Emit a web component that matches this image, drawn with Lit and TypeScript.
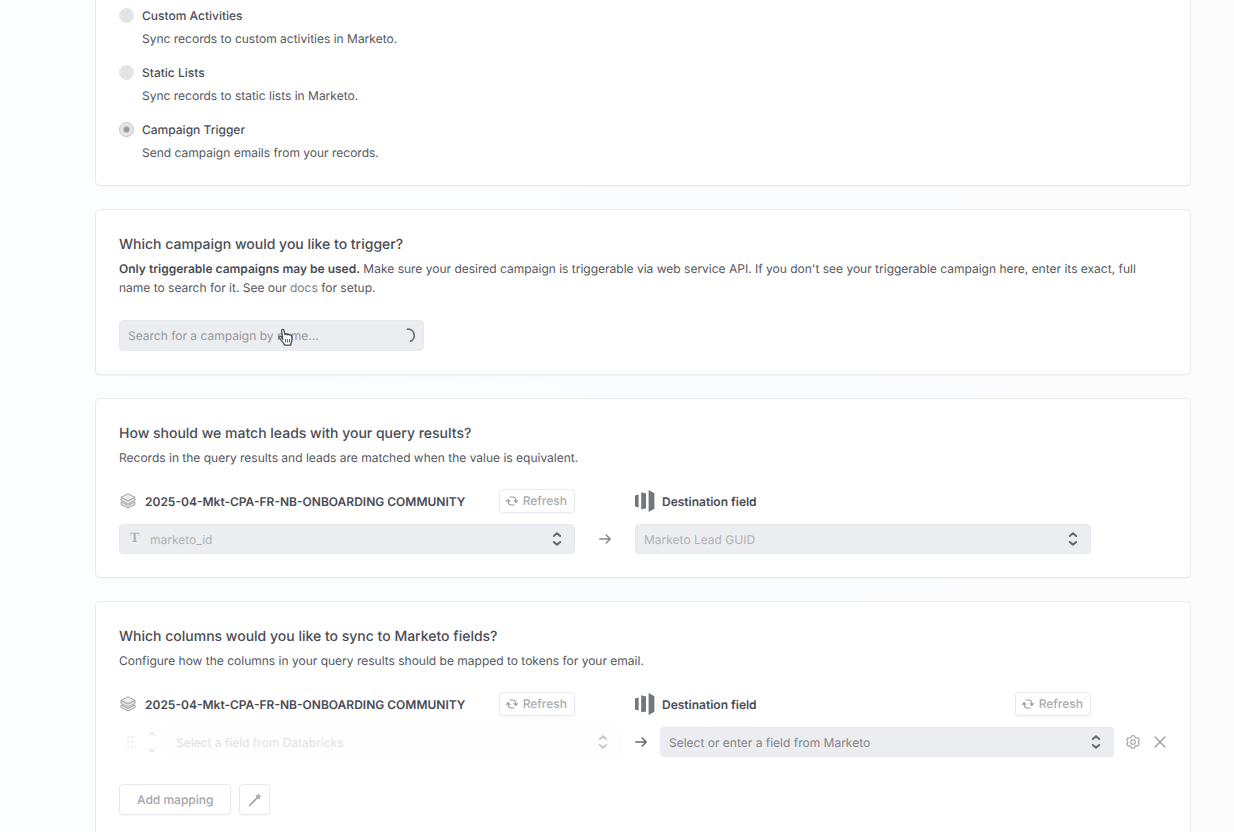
import { LitElement, html, css, svg } from "lit";
import { customElement, property } from "lit/decorators.js";

const layersIcon = html`<svg class="layers" viewBox="0 0 16 16" width="16" height="16" fill="none" stroke="#a2a4a8" stroke-width="1" stroke-linejoin="round" aria-hidden="true">
  <path fill="#ececee" d="M8 .8 15 4.4 8 8 1 4.4Z" />
  <path fill="#e4e5e7" d="M1 4.400v3L8 11l7-3.600v-3L8 8ZM1 8.800v2.600L8 15l7-3.600V8.800L8 12.400Z" />
</svg>`;

const marketoIcon = html`<svg viewBox="0 0 20 22" width="20" height="22" fill="#74767e" aria-hidden="true">
  <path d="M0 5.500 3.600 4.600v12.800L0 16.500Z" />
  <path d="M6.200 2.200 11 3.600v14.800l-4.800.8Z" />
  <path d="M13.600 0 19.400 3.200v15.600L13.600 22Z" />
</svg>`;

const refreshIcon = html`<svg viewBox="0 0 12 12" width="12" height="12" fill="none" stroke="#9b9da1" stroke-width="1.200" stroke-linecap="round" stroke-linejoin="round" aria-hidden="true">
  <path d="M4 2h2.800a3 3 0 0 1 3 3v2.200M8 10H5.200a3 3 0 0 1-3-3V4.800" />
  <path d="M.6 6.300 2.200 4.700l1.600 1.600M8.200 5.700l1.600 1.600 1.600-1.600" />
</svg>`;

const arrowIcon = html`<svg viewBox="0 0 12 12" width="12" height="12" fill="none" stroke="currentColor" stroke-width="1.500" stroke-linecap="round" stroke-linejoin="round" aria-hidden="true">
  <path d="M.8 6h10.400M7.200 2 11.200 6 7.200 10" />
</svg>`;

const sortIcon = html`<svg class="sort" viewBox="0 0 10 16" width="10" height="16" fill="none" stroke="currentColor" stroke-width="2" stroke-linecap="round" stroke-linejoin="round" aria-hidden="true">
  <path d="M1.800 5 5 2.200 8.200 5M1.800 11 5 13.800 8.200 11" />
</svg>`;

const gearTeeth = svg`<path d="M5.500.8h3l.5 1.700 1.300.7 1.700-.4 1.300 2.300-1.100 1.200v1.400l1.100 1.200-1.300 2.300-1.700-.4-1.300.7-.5 1.700h-3L5 11.500l-1.300-.7-1.700.4L.7 8.900l1.100-1.200V6.300L.7 5.100 2 2.800l1.700.4L5 2.500Z" />`;

@customElement("refresh-button")
export class RefreshButton extends LitElement {
  static styles = css`
    :host { display: block; }
    .refresh {
      display: flex;
      align-items: center;
      gap: 5px;
      height: 24px;
      padding: 0 7px 0 6px;
      border: 1px solid #e9eaed;
      border-radius: 4px;
      background: #fff;
      color: #abacb0;
      font: 500 12px/16px Inter, sans-serif;
      text-rendering: inherit;
      box-shadow: 0 1px 2px rgba(40, 50, 80, 0.04);
    }
  `;

  render() {
    return html`<button class="refresh" type="button">${refreshIcon}Refresh</button>`;
  }
}

@customElement("field-select")
export class FieldSelect extends LitElement {
  @property() label = "";
  @property() value = "";
  @property({ type: Boolean }) typed = false;

  static styles = css`
    :host { display: block; color: #b0b2b6; }
    :host(.active) { color: #828489; }
    :host(.faded) { color: #dfe0e4; }
    .box {
      display: grid;
      grid-template-columns: minmax(0, 1fr);
      align-items: center;
    }
    .box > * { grid-area: 1 / 1; }
    .control {
      box-sizing: border-box;
      width: 100%;
      height: 30px;
      margin: 0;
      padding: 0 30px 0 8px;
      appearance: none;
      border: 1px solid #e8e9ed;
      border-radius: 4px;
      background: #ecedf1;
      color: inherit;
      font: 400 12px/19px Inter, sans-serif;
      text-rendering: inherit;
    }
    :host(.faded) .control { background: #fefefe; border-color: #fbfbfc; }
    .typed { padding-left: 30px; }
    .type {
      justify-self: start;
      padding-left: 11px;
      font: 700 14px/18px "Liberation Serif", serif;
      pointer-events: none;
    }
    .sort {
      justify-self: end;
      margin-right: 13px;
      color: #66686e;
      pointer-events: none;
    }
    :host(.faded) .sort { color: #c9cacd; }
  `;

  render() {
    return html`<div class="box">
      <select class="control ${this.typed ? "typed" : ""}" aria-label=${this.label}>
        <option>${this.value}</option>
      </select>
      ${this.typed ? html`<span class="type" aria-hidden="true">T</span>` : ""}
      ${sortIcon}
    </div>`;
  }
}

const SYNC_TYPES = [
  { id: "custom", name: "Custom Activities", text: "Sync records to custom activities in Marketo." },
  { id: "lists", name: "Static Lists", text: "Sync records to static lists in Marketo." },
  { id: "trigger", name: "Campaign Trigger", text: "Send campaign emails from your records." },
];

const SOURCE = "2025-04-Mkt-CPA-FR-NB-ONBOARDING COMMUNITY";

@customElement("app-root")
export class AppRoot extends LitElement {
  static styles = css`
    :host {
      display: block;
      color: #55575e;
      font: 400 12px/19px Inter, sans-serif;
      text-rendering: geometricPrecision;
      background: #fff;
    }
    .page {
      display: flex;
      flex-direction: column;
      gap: 23px;
      padding: 0 43px 0 95px;
      background: linear-gradient(90deg, #fbfdff, #fcfcfd 90%);
    }
    .card {
      padding: 24px 23px 23px;
      border: 1px solid #e9eaee;
      border-radius: 5px;
      background: #fff;
      box-shadow: 0 1px 2px rgba(40, 50, 80, 0.04);
    }
    .card.first { border-top: 0; border-radius: 0 0 5px 5px; padding-top: 6px; }
    .card.last { border-bottom: 0; border-radius: 5px 5px 0 0; padding-bottom: 17px; }
    .options { display: flex; flex-direction: column; gap: 15px; }
    .option {
      display: grid;
      grid-template-columns: 15px 1fr;
      column-gap: 8px;
      row-gap: 4px;
      align-items: center;
    }
    .name { color: #4d4f57; font-weight: 500; }
    .option .text { grid-column: 2; }
    .radio {
      width: 15px;
      height: 15px;
      margin: 0;
      appearance: none;
      border-radius: 50%;
      border: 1px solid #e6e7e9;
      background: #e3e4e6;
    }
    .radio:checked {
      border-color: #c3c4c7;
      background: radial-gradient(circle, #98999d 2px, #e6e7e9 4px);
    }
    h2 {
      margin: 0 0 3px;
      color: #4a4c54;
      font-size: 14px;
      line-height: 22px;
      font-weight: 500;
    }
    p { margin: 0; }
    b { font-weight: 600; color: #4a4c54; }
    a { color: #7b7d84; text-decoration: none; }
    .search {
      position: relative;
      display: grid;
      align-items: center;
      width: 305px;
      margin-top: 23px;
    }
    .search > .query, .search > .spinner { grid-area: 1 / 1; }
    .query {
      box-sizing: border-box;
      width: 100%;
      height: 31px;
      margin: 0;
      padding: 0 30px 0 8px;
      border: 1px solid #e9eaee;
      border-radius: 4px;
      background: #ecedf1;
      font: inherit;
      text-rendering: inherit;
    }
    .query::placeholder { color: #97999f; opacity: 1; }
    .spinner { justify-self: end; margin-right: 9px; }
    .pointer { position: absolute; left: 158px; top: 8px; }
    .headers {
      display: grid;
      grid-template-columns: minmax(0, 1fr) 60px minmax(0, 1fr);
      margin-top: 22px;
      padding-right: 76px;
      row-gap: 11px;
      align-items: center;
    }
    .headers + .mapping { margin-top: 11px; }
    .head {
      display: flex;
      align-items: center;
      height: 24px;
      color: #4a4c54;
      font-weight: 600;
    }
    .head.right { grid-column: 3; gap: 7px; }
    .head.left { gap: 9px; padding-left: 1px; }
    .head span { white-space: nowrap; }
    .head svg { flex: none; }
    .head refresh-button { margin-left: auto; }
    .arrow { display: flex; justify-content: center; color: #85878c; }
    .mapping {
      display: grid;
      grid-template-columns: 48px minmax(0, 1fr) 39px minmax(0, 1fr) 53px;
      align-items: center;
    }
    .mapping .arrow { color: #66686e; }
    .grips { display: flex; align-items: center; gap: 15px; padding-left: 8px; }
    .tools { display: flex; align-items: center; justify-content: flex-end; gap: 13px; }
    button { font: inherit; margin: 0; text-rendering: inherit; }
    .icon { display: flex; padding: 0; border: 0; background: none; }
    .actions { display: flex; gap: 8px; margin-top: 27px; }
    .action {
      display: flex;
      align-items: center;
      justify-content: center;
      height: 31px;
      min-width: 31px;
      padding: 0 7px;
      border: 1px solid #e8e9ec;
      border-radius: 4px;
      background: #fff;
      color: #a5a6ab;
      font-weight: 500;
      box-shadow: 0 1px 2px rgba(40, 50, 80, 0.04);
    }
    .action.wide { padding: 0 17px; }
  `;

  render() {
    return html`<main class="page">
      <section class="card first">
        <div class="options">
          ${SYNC_TYPES.map(
            (t) => html`<div class="option">
              <input class="radio" type="radio" name="sync" id=${t.id} ?checked=${t.id === "trigger"} />
              <label class="name" for=${t.id}>${t.name}</label>
              <div class="text">${t.text}</div>
            </div>`
          )}
        </div>
      </section>

      <section class="card">
        <h2>Which campaign would you like to trigger?</h2>
        <p><b>Only triggerable campaigns may be used.</b> Make sure your desired campaign is triggerable via web service API. If you don't see your triggerable campaign here, enter its exact, full name to search for it. See our <a href="#docs">docs</a> for setup.</p>
        <div class="search">
          <input class="query" type="text" aria-label="Campaign" placeholder="Search for a campaign by name..." />
          <svg class="spinner" viewBox="0 0 16 16" width="16" height="16" fill="none" stroke="#6c6e74" stroke-width="1.800" stroke-linecap="round" aria-hidden="true">
            <path d="M8.500 1.200a6.300 6.300 0 0 1 3.100 12" />
          </svg>
          <svg class="pointer" viewBox="0 0 18 19" width="18" height="19" fill="#fff" stroke="#4b4c51" stroke-width="1.300" stroke-linejoin="round" stroke-linecap="round" aria-hidden="true">
            <path d="M5.800 11.200 4.600 3.100C4.400.9 6.700.7 7.100 2.700l.8 4c.5-1.100 2-1 2.300.1.500-.8 2-.7 2.300.4.700-.6 2-.3 2.100.9l.4 3.400c.1 2-.7 2.700-1 3.600l-.2 2.100H7.500c0-1.700-1.600-2.900-2.900-4.500L2.300 9.900c-1-1.500.7-2.400 1.700-1.300Z" />
            <path fill="none" d="M8.600 11.500v2.600M10.600 11.500v2.600M12.500 11.500v2.600" stroke-width=".9" />
          </svg>
        </div>
      </section>

      <section class="card">
        <h2>How should we match leads with your query results?</h2>
        <p>Records in the query results and leads are matched when the value is equivalent.</p>
        <div class="headers">
          <div class="head left">${layersIcon}<span>${SOURCE}</span><refresh-button></refresh-button></div>
          <div class="head right">${marketoIcon}<span>Destination field</span></div>
          <field-select typed label="Source column" value="marketo_id"></field-select>
          <div class="arrow">${arrowIcon}</div>
          <field-select label="Destination field" value="Marketo Lead GUID"></field-select>
        </div>
      </section>

      <section class="card last">
        <h2>Which columns would you like to sync to Marketo fields?</h2>
        <p>Configure how the columns in your query results should be mapped to tokens for your email.</p>
        <div class="headers">
          <div class="head left">${layersIcon}<span>${SOURCE}</span><refresh-button></refresh-button></div>
          <div class="head right">${marketoIcon}<span>Destination field</span><refresh-button></refresh-button></div>
        </div>
        <div class="mapping">
          <div class="grips">
            <svg viewBox="0 0 6 14" width="6" height="14" fill="#e6e7ea" aria-hidden="true">
              <circle cx="1.200" cy="2" r="1" /><circle cx="5" cy="2" r="1" />
              <circle cx="1.200" cy="7" r="1" /><circle cx="5" cy="7" r="1" />
              <circle cx="1.200" cy="12" r="1" /><circle cx="5" cy="12" r="1" />
            </svg>
            <svg viewBox="0 0 8 22" width="8" height="22" fill="none" stroke="#dcdde1" stroke-width="1.200" stroke-linecap="round" aria-hidden="true">
              <path d="M1.500 4 4 2l2.500 2M1.500 18.500 4 20.500l2.500-2" />
            </svg>
          </div>
          <field-select class="faded" label="Source column" value="Select a field from Databricks"></field-select>
          <div class="arrow">${arrowIcon}</div>
          <field-select class="active" label="Destination field" value="Select or enter a field from Marketo"></field-select>
          <div class="tools">
            <button class="icon" type="button" aria-label="Settings">
              <svg viewBox="0 0 14 14" width="14" height="14" fill="none" stroke="#a0a1a6" stroke-width="1.100" stroke-linejoin="round" aria-hidden="true">${gearTeeth}<circle cx="7" cy="7" r="2.300" /></svg>
            </button>
            <button class="icon" type="button" aria-label="Remove">
              <svg viewBox="0 0 14 14" width="14" height="14" fill="none" stroke="#96989d" stroke-width="1.200" stroke-linecap="round" aria-hidden="true"><path d="m2 2 10 10M12 2 2 12" /></svg>
            </button>
          </div>
        </div>
        <div class="actions">
          <button class="action wide" type="button">Add mapping</button>
          <button class="action" type="button" aria-label="Suggest mappings">
            <svg viewBox="0 0 14 14" width="14" height="14" fill="none" stroke="#a2a3a8" stroke-width="1.700" stroke-linecap="round" stroke-linejoin="round" aria-hidden="true">
              <path d="M1.500 12.500 9 5" />
              <path stroke-width=".8" d="m10.600 1.200.6 1.600 1.600.5-1.400 1 0 1.700-1.400-1-1.600.4.500-1.600-.9-1.300 1.700 0Z" fill="#b4b5b9" />
            </svg>
          </button>
        </div>
      </section>
    </main>`;
  }
}
